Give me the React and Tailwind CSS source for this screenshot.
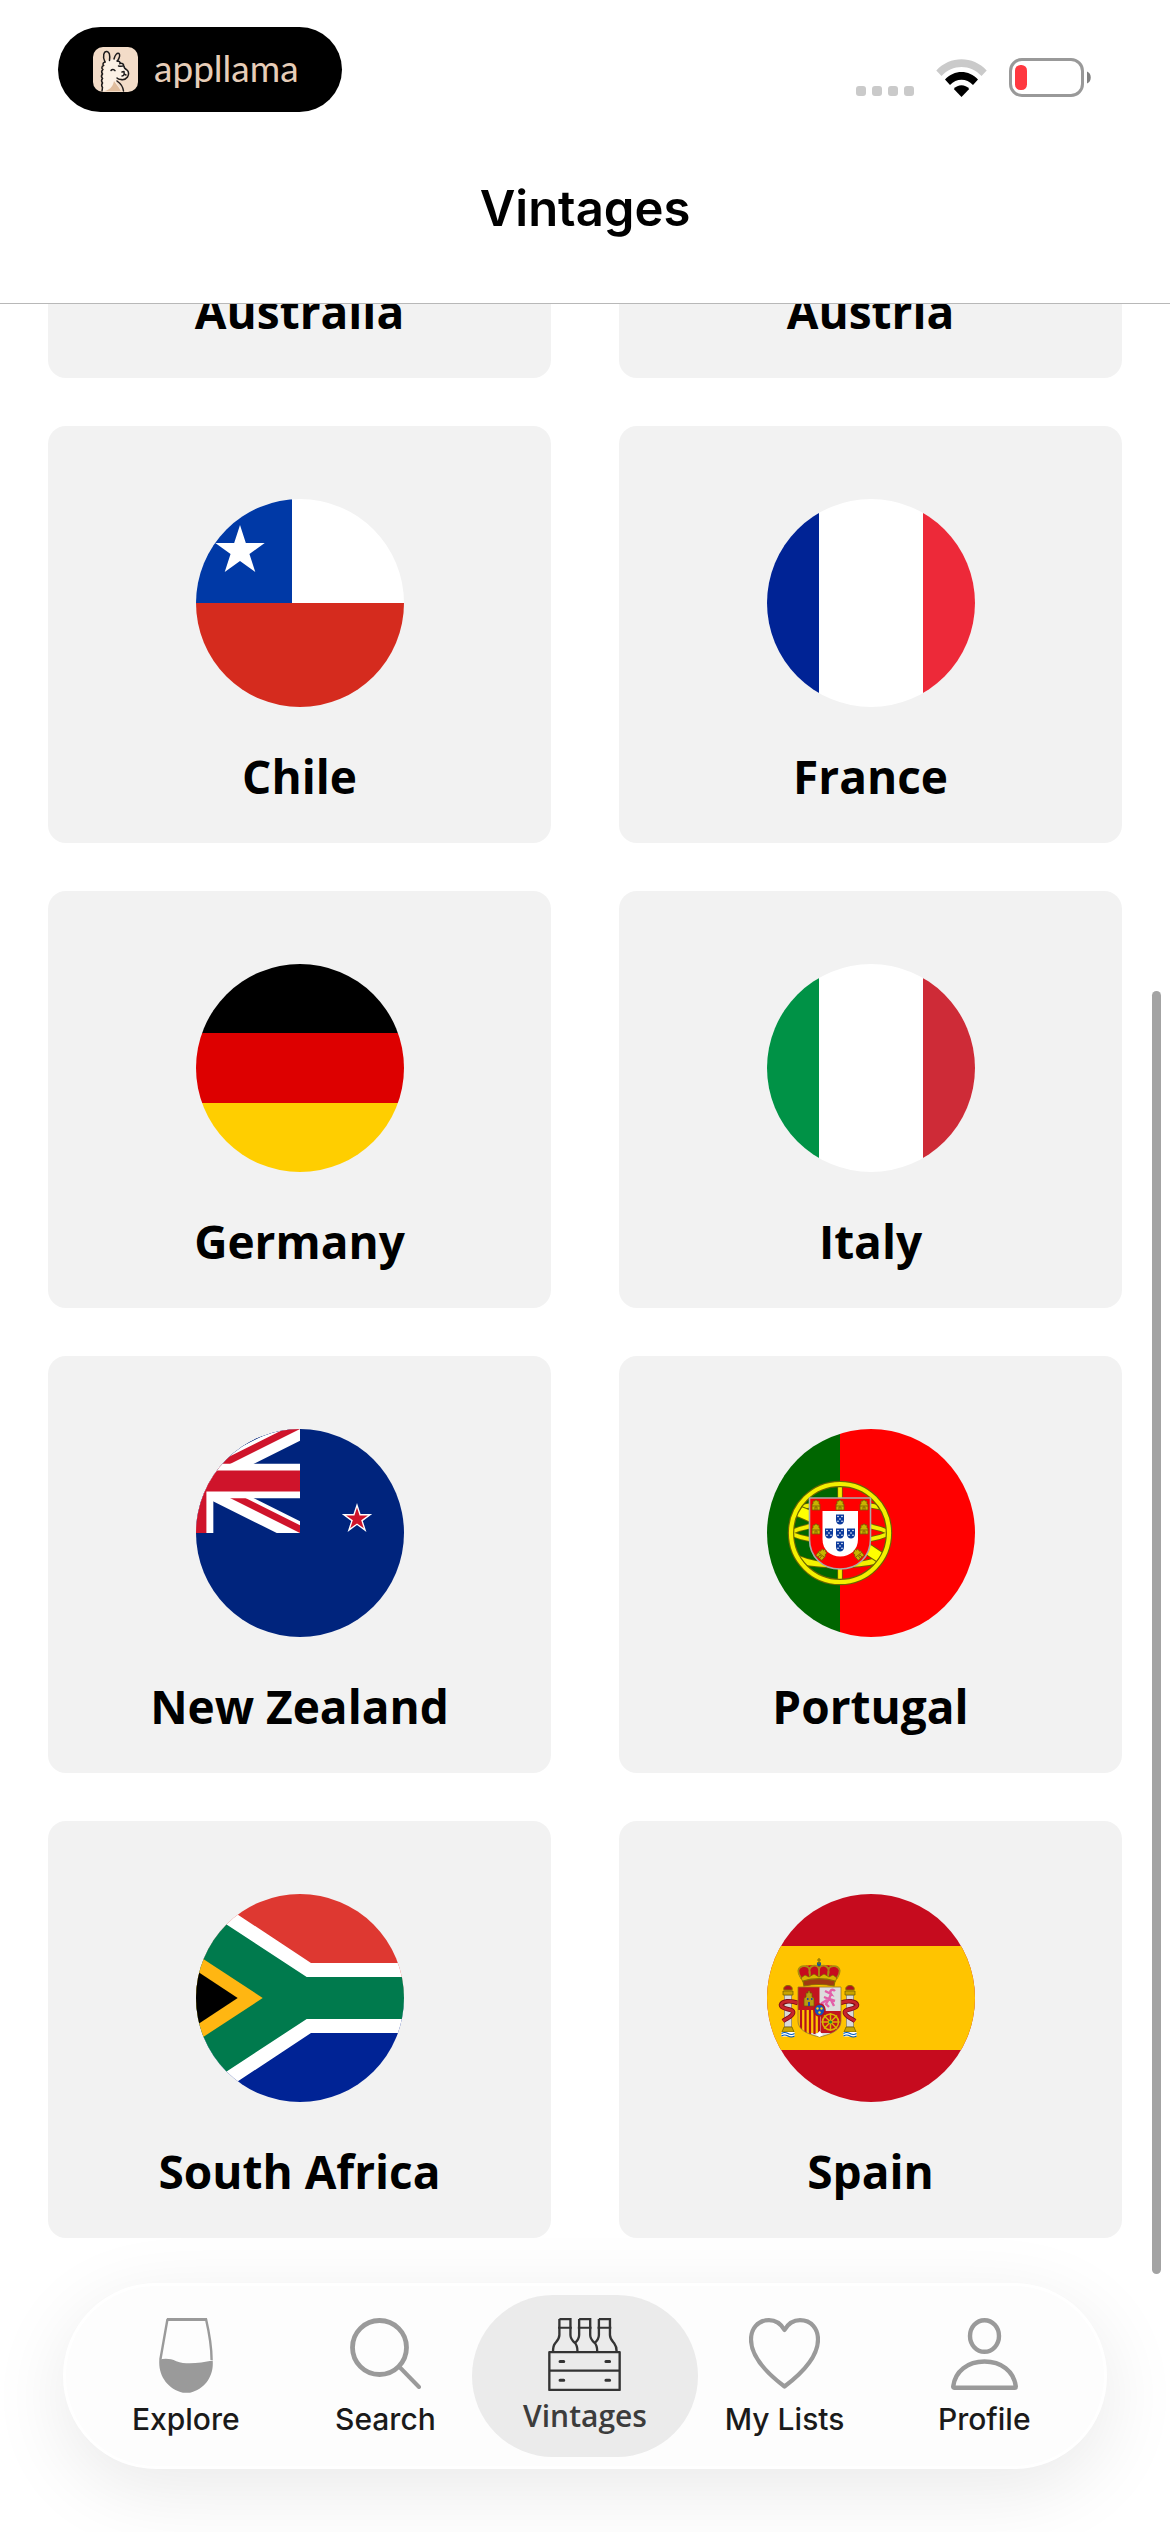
import React from "react";
import clsx from "clsx";

const starPoints = (cx, cy, r) =>
  Array.from({ length: 10 }, (_, i) => {
    const radius = i % 2 === 0 ? r : r * 0.382;
    const angle = (Math.PI / 5) * i - Math.PI / 2;
    return `${cx + radius * Math.cos(angle)},${cy + radius * Math.sin(angle)}`;
  }).join(" ");

const Flag = ({ children }) => (
  <svg
    viewBox="0 0 208 208"
    className="w-[208px] h-[208px] rounded-full overflow-hidden"
    aria-hidden="true"
  >
    {children}
  </svg>
);

const UnionJack = ({ id }) => (
  <g transform="translate(-104 0) scale(3.4667)">
    <clipPath id={`${id}-box`}>
      <path d="M0 0h60v30H0z" />
    </clipPath>
    <clipPath id={`${id}-saltire`}>
      <path d="M30 15h30v15zv15H0zH0V0zV0h30z" />
    </clipPath>
    <g clipPath={`url(#${id}-box)`}>
      <path d="M0 0h60v30H0z" fill="#00247d" />
      <path d="M0 0l60 30M60 0L0 30" stroke="#fff" strokeWidth="6" />
      <path
        d="M0 0l60 30M60 0L0 30"
        clipPath={`url(#${id}-saltire)`}
        stroke="#cf142b"
        strokeWidth="4"
      />
      <path d="M30 0v30M0 15h60" stroke="#fff" strokeWidth="10" />
      <path d="M30 0v30M0 15h60" stroke="#cf142b" strokeWidth="6" />
    </g>
  </g>
);

const AustraliaFlag = () => (
  <Flag>
    <path d="M0 0h208v208H0z" fill="#00247d" />
    <UnionJack id="au" />
    <polygon points={starPoints(160, 90, 16)} fill="#fff" />
  </Flag>
);

const AustriaFlag = () => (
  <Flag>
    <path d="M0 0h208v208H0z" fill="#ed2939" />
    <path d="M0 69h208v70H0z" fill="#fff" />
  </Flag>
);

const ChileFlag = () => (
  <Flag>
    <path d="M0 0h208v104H0z" fill="#fff" />
    <path d="M0 0h96v104H0z" fill="#0039a6" />
    <path d="M0 104h208v104H0z" fill="#d52b1e" />
    <polygon points={starPoints(44, 52, 26)} fill="#fff" />
  </Flag>
);

const Tricolour = ({ left, right }) => (
  <Flag>
    <path d="M0 0h208v208H0z" fill="#fff" />
    <path d="M0 0h52v208H0z" fill={left} />
    <path d="M156 0h52v208h-52z" fill={right} />
  </Flag>
);

const GermanyFlag = () => (
  <Flag>
    <path d="M0 0h208v70H0z" fill="#000" />
    <path d="M0 69h208v70H0z" fill="#d00" />
    <path d="M0 139h208v69H0z" fill="#ffce00" />
  </Flag>
);

const NewZealandFlag = () => (
  <Flag>
    <path d="M0 0h208v208H0z" fill="#00247d" />
    <UnionJack id="nz" />
    <polygon points={starPoints(161, 90, 16)} fill="#fff" />
    <polygon points={starPoints(161, 90, 11.5)} fill="#cf142b" />
  </Flag>
);

const Castle = ({ x, y, rotate = 0 }) => (
  <g transform={`translate(${x} ${y}) rotate(${rotate})`}>
    <path
      d="M-4 5v-6h1v-3h2v-1h2v1h2v3h1v6z"
      fill="#c8b400"
      stroke="#7a5c00"
      strokeWidth="0.8"
    />
    <path d="M-4 1h8M-1 5V2h2v3" fill="none" stroke="#7a5c00" strokeWidth="0.8" />
  </g>
);

const Quina = ({ x, y }) => (
  <g transform={`translate(${x} ${y})`}>
    <path d="M-4-4.500h8V1c0 3-2 4.500-4 4.500S-4 4-4 1z" fill="#0a3a9c" />
    <g fill="#fff">
      <circle cx="-2" cy="-2.500" r="0.800" />
      <circle cx="2" cy="-2.500" r="0.800" />
      <circle cx="0" cy="0" r="0.800" />
      <circle cx="-2" cy="2.200" r="0.800" />
      <circle cx="2" cy="2.200" r="0.800" />
    </g>
  </g>
);

const SPHERE =
  "M73 54v100M22 104c28-13 74-13 102 0M22 104c28 12 74 12 102 0M30 79c26-6 60-6 86 0M29 128c26 11 62 11 88 0M33 133c26 5 54 5 80-1";

const PortugalFlag = () => (
  <Flag>
    <path d="M0 0h73v208H0z" fill="#060" />
    <path d="M73 0h135v208H73z" fill="#f00" />
    <g fill="none">
      <path d={SPHERE} stroke="#6b6500" strokeWidth="5.500" />
      <path d={SPHERE} stroke="#f4f000" strokeWidth="3.800" />
      <path d="M28 81c26 9 66 34 86 48" stroke="#6b6500" strokeWidth="12" />
      <path d="M28 81c26 9 66 34 86 48" stroke="#ff0" strokeWidth="10" />
      <circle cx="73" cy="104" r="49" stroke="#6b6500" strokeWidth="6.500" />
      <circle cx="73" cy="104" r="49" stroke="#f4f000" strokeWidth="4.200" />
    </g>
    <path
      d="M42.500 69h61v41c0 18-13 30-30.500 30s-30.500-12-30.500-30z"
      fill="#f00"
      stroke="#a9a9a9"
      strokeWidth="1.600"
    />
    <path
      d="M55.500 82h35.500v28c0 11-8 17.500-17.800 17.500s-17.700-6.500-17.700-17.500z"
      fill="#fff"
    />
    <Castle x={49} y={76} />
    <Castle x={73} y={76} />
    <Castle x={97} y={76} />
    <Castle x={49} y={100} />
    <Castle x={97} y={100} />
    <Castle x={55} y={125} rotate={40} />
    <Castle x={91} y={125} rotate={-40} />
    <Quina x={73} y={90} />
    <Quina x={62} y={104} />
    <Quina x={73} y={104} />
    <Quina x={84} y={104} />
    <Quina x={73} y={117} />
  </Flag>
);

const SouthAfricaFlag = () => (
  <Flag>
    <path d="M0 0h208v104H0z" fill="#de3831" />
    <path d="M0 104h208v104H0z" fill="#002395" />
    <path d="M0-7l115 76h93v70h-93L0 215z" fill="#fff" />
    <path d="M0 10.500L110.700 83H208v42h-97.300L0 197.500z" fill="#007a4d" />
    <path d="M0 60.300L66.700 104 0 147.700z" fill="#ffb612" />
    <path d="M0 76.500L41.700 104 0 131.500z" fill="#000" />
  </Flag>
);

const Pillar = ({ x }) => (
  <g transform={`translate(${x} 0)`}>
    <path d="M-3.500 101h7v32h-7z" fill="#d9d9d9" stroke="#777" strokeWidth="0.700" />
    <path d="M-5 97h10v4H-5z" fill="#c9a400" stroke="#6d5a00" strokeWidth="0.700" />
    <path d="M-4 96c-2-6 10-6 8 0z" fill="#b3121f" stroke="#8a7000" strokeWidth="1" />
    <path d="M-4 133h8l2 5H-6z" fill="#c9a400" stroke="#6d5a00" strokeWidth="0.700" />
    <path d="M-6.500 138h13v4.500h-13z" fill="#fff" />
    <path
      d="M-6.500 139.500q3-2 6.500 0t6.500 0M-6.500 142q3-2 6.500 0t6.500 0"
      stroke="#005bbf"
      strokeWidth="1.200"
      fill="none"
    />
  </g>
);

const RIBBONS =
  "M31 109c-8-3-16-2-17 2 0 5 13 3 12 8-1 4-6 5-10 8M73 109c8-3 16-2 17 2 0 5-13 3-12 8 1 4 6 5 10 8";

const SpainFlag = () => (
  <Flag>
    <path d="M0 0h208v208H0z" fill="#c60b1e" />
    <path d="M0 52h208v104H0z" fill="#ffc400" />
    <Pillar x={21} />
    <Pillar x={83} />
    <path d={RIBBONS} fill="none" stroke="#7c0a14" strokeWidth="4.600" />
    <path d={RIBBONS} fill="none" stroke="#c8242c" strokeWidth="3" />
    {/* crown */}
    <path d="M34 85c-9-14 8-15 18-13 10-2 27-1 18 13z" fill="#c60b1e" />
    <path
      d="M34 84c-8-12 4-14 8-10 1 3 1 6 1 9M70 84c8-12-4-14-8-10-1 3-1 6-1 9M43 82c-4-12 9-13 9-6v7M61 82c4-12-9-13-9-6"
      fill="none"
      stroke="#a88c10"
      strokeWidth="1.800"
    />
    <path d="M34 84l4-3 4 2 5-3 5 3 5-3 5 3 4-2 4 3-2 4H36z" fill="#d8b400" stroke="#7a6500" strokeWidth="0.700" />
    <path d="M36 87c10-3 22-3 32 0l-1 5c-10-2-20-2-30 0z" fill="#a03a12" stroke="#8a7000" strokeWidth="1.200" />
    <circle cx="52" cy="70" r="2.200" fill="#1a5a8a" />
    <path d="M52 64v6M50 66h4" stroke="#8a7000" strokeWidth="1.200" />
    {/* quartered shield */}
    <clipPath id="es-shield">
      <path d="M31 93h43v34c0 9-9 13-21.500 16C40 140 31 136 31 127z" />
    </clipPath>
    <g clipPath="url(#es-shield)">
      <path d="M31 93h43v50H31z" fill="#ddd" />
      <path d="M31 93h21.500v23H31z" fill="#c3141f" />
      <path d="M31 116h21.500v23H31z" fill="#ffc400" />
      <path
        d="M34 116v24M38.500 116v24M43 116v24M47.500 116v24M52 116v24"
        stroke="#b5121b"
        strokeWidth="2.200"
      />
      <path d="M53.500 117h21v22h-21z" fill="#c3141f" />
    </g>
    <path d="M37 112v-8l2-1v-4h2v-2h2v2h2v4l2 1v8z" fill="#b89a12" stroke="#6d5a00" strokeWidth="0.700" />
    <path d="M40 105h1.500M44 105h1.500M42 108v4" stroke="#2347a8" strokeWidth="2" />
    <path
      d="M68 97c-3-3-6 0-4 3l-6-3M64 100l-2 5-5-2M62 105l6 2M62 105l-3 5 3 3M64 106l3 6M60 106l-5 3 1 3"
      fill="none"
      stroke="#e35fa8"
      strokeWidth="2.400"
    />
    <circle cx="63.500" cy="128" r="8" fill="none" stroke="#d8b400" strokeWidth="1.600" />
    <path
      d="M63.500 119v18M54.500 128h18M57 121.500l13 13M70 121.500l-13 13"
      stroke="#d8b400"
      strokeWidth="1.500"
    />
    <circle cx="63.500" cy="128" r="1.600" fill="#1a8a3a" />
    <path
      d="M31 93h43v34c0 9-9 13-21.500 16C40 140 31 136 31 127z"
      fill="none"
      stroke="#9a7a20"
      strokeWidth="0.800"
    />
    <path d="M49 141l3.500-4 3.500 4-3.500 2z" fill="#fff" />
    <ellipse cx="52.500" cy="116" rx="5.500" ry="6" fill="#1450b8" stroke="#b5121b" strokeWidth="1.600" />
    <g fill="#ffd21a">
      <circle cx="50.500" cy="114.500" r="1.200" />
      <circle cx="54.500" cy="114.500" r="1.200" />
      <circle cx="52.500" cy="118.500" r="1.200" />
    </g>
  </Flag>
);

const GlassIcon = () => (
  <svg viewBox="0 0 54 75" className="w-[54px] h-[75px]" aria-hidden="true">
    <path d="M8 1.500h40" stroke="#9a9a9a" strokeWidth="3" />
    <path
      d="M8.500 1L1.300 42M47 1c3 13 5.600 28 5.600 41"
      fill="none"
      stroke="#9a9a9a"
      strokeWidth="2.400"
    />
    <path
      d="M.3 42c5-2 11-1.500 17 1.200 11 4 24 1.500 36.400-.7C55 58 46 71 31 74.700h-7C9 71-.8 58 .3 42z"
      fill="#9a9a9a"
    />
  </svg>
);

const SearchIcon = () => (
  <svg viewBox="0 0 71 71" className="w-[71px] h-[71px]" aria-hidden="true">
    <g fill="none" stroke="#9a9a9a" strokeLinecap="round">
      <circle cx="29.500" cy="29.500" r="27" strokeWidth="4.800" />
      <path d="M49.500 49l19.500 20" strokeWidth="4" />
    </g>
  </svg>
);

const CrateIcon = () => (
  <svg viewBox="88 57 218 218" className="w-[73px] h-[73px]" aria-hidden="true">
    <g fill="none" stroke="#343434" strokeWidth="7">
      <path d="M92 159h210v113H92zM92 214h210" strokeLinejoin="round" />
      <path d="M122 60h33v48c0 12 7 18 13 23 5 5 8 10 8 26M122 60v48c0 12-7 18-13 25-4 5-6 12-6 24" />
      <path d="M181 60h33v48c0 12 7 18 13 23 5 5 8 10 8 26M181 60v48c0 10-5 17-13 24" />
      <path d="M240 60h33v48c0 12 7 18 13 25 4 5 7 12 7 24M240 60v48c0 10-5 17-13 24" />
      <path d="M118 86h41M177 86h41M236 86h41" strokeWidth="6" />
      <path
        d="M124 187h11M261 187h11M124 243h11M261 243h11"
        strokeWidth="9"
        strokeLinecap="round"
      />
    </g>
  </svg>
);

const HeartIcon = () => (
  <svg viewBox="0 0 71 71" className="w-[71px] h-[71px]" aria-hidden="true">
    <path
      d="M35.500 12C32 6 27 2.200 20 2.200 8.500 2.200 2 11 2 21.500c0 17 15 33 33.500 47C54 54.500 69 38 69 21.500 69 11 62.500 2.200 51 2.200c-7 0-12 3.800-15.500 9.800z"
      fill="none"
      stroke="#9a9a9a"
      strokeWidth="4.200"
      strokeLinejoin="round"
    />
  </svg>
);

const ProfileIcon = () => (
  <svg viewBox="0 0 67 72" className="w-[67px] h-[72px]" aria-hidden="true">
    <g fill="none" stroke="#9a9a9a" strokeWidth="4.400" strokeLinejoin="round">
      <ellipse cx="33.500" cy="18" rx="14.500" ry="15.800" />
      <path d="M2.200 68.500C4 53 17 43.500 33.500 43.500S63 53 64.800 68.500c0 .8-.5 1.300-1.300 1.300h-60c-.8 0-1.300-.5-1.300-1.300z" />
    </g>
  </svg>
);

const LlamaLogo = () => (
  <svg viewBox="0 0 45 45" className="w-[45px] h-[45px] rounded-[10px]" aria-hidden="true">
    <path d="M0 0h45v45H0z" fill="#f3dcc8" />
    <path
      d="M10 44c-1-9 0-20 2-28l2-3 9-1 4 2 4 3 4 8-3 6-8 1-1 3c1 3 4 5 5 9z"
      fill="#fcf1e6"
    />
    <path d="M12 44c4-1 8-4 9-10 2 3 5 6 7 10z" fill="#e0bd9d" />
    <g fill="none" stroke="#1e1b1c" strokeWidth="1.500" strokeLinecap="round">
      <path d="M12 15C9 9 11 4 14 4.500c3 .5 3 5 2.500 9M21 12c1-4 3-6.500 5-5.500 1.500 1.500 0 5-1.500 7.500" />
      <path d="M24 14c2 0 3.500 1 3 2.500 2-.5 4 .5 3.500 2-1 1-3 1-5 .5M31 19c0 2 1 3 3 4 2 1.500 2 5 .5 7-1.500 2-4 3-6.500 2.500-2 0-3-.5-4-1.500M29 25l2-.5M31 25c.5 2 0 4-2 4M31 27l2 1" />
      <path d="M18 23.500c1-1.500 3-1.500 4 .2" />
      <path d="M12 15c-2 .5-2.500 2-1.500 3.500-2 1-2 3-.7 4-1.500 1.500-1.500 3-.3 4.500-1.500 1.500-1.300 3 0 4.500-1.300 1.500-1.300 3 0 4.500-1.300 1.500-1 3 0 4.500L9 44M24 34c3 2 6 6 6.500 10" />
    </g>
  </svg>
);

const WifiIcon = () => (
  <svg viewBox="0 0 51 38" className="w-[51px] h-[38px] mx-[22px]" aria-label="Wi-Fi">
    <path
      d="M.3 11.500C14-3.500 37-3.500 50.700 11.500L45.500 17C34.500 5 16.500 5 5.500 17z"
      fill="#cacaca"
    />
    <path d="M9 20.500c9-10 24-10 33 0l-5 5.500c-6.500-7-16.500-7-23 0z" fill="#000" />
    <path d="M17.800 30c4-5 11.400-5 15.400 0l-7.700 8z" fill="#000" />
  </svg>
);

const BatteryIcon = () => (
  <svg viewBox="0 0 83 39" className="w-[83px] h-[39px]" aria-label="Battery low">
    <rect
      x="1.500"
      y="1.500"
      width="72"
      height="36"
      rx="11.500"
      fill="none"
      stroke="#999"
      strokeWidth="3"
    />
    <rect x="6" y="7" width="12" height="25" rx="5.500" fill="#ff3840" />
    <path d="M78 13.500c5 1.500 5 10.500 0 12z" fill="#808080" />
  </svg>
);

const countries = [
  { name: "Australia", flag: <AustraliaFlag /> },
  { name: "Austria", flag: <AustriaFlag /> },
  { name: "Chile", flag: <ChileFlag /> },
  { name: "France", flag: <Tricolour left="#002395" right="#ed2939" /> },
  { name: "Germany", flag: <GermanyFlag /> },
  { name: "Italy", flag: <Tricolour left="#009246" right="#ce2b37" /> },
  { name: "New Zealand", flag: <NewZealandFlag /> },
  { name: "Portugal", flag: <PortugalFlag /> },
  { name: "South Africa", flag: <SouthAfricaFlag /> },
  { name: "Spain", flag: <SpainFlag /> },
];

const tabs = [
  { label: "Explore", icon: <GlassIcon /> },
  { label: "Search", icon: <SearchIcon /> },
  { label: "Vintages", icon: <CrateIcon />, active: true },
  { label: "My Lists", icon: <HeartIcon /> },
  { label: "Profile", icon: <ProfileIcon /> },
];

const StatusBar = () => (
  <div className="flex items-center justify-between pt-[27px] pl-[58px] pr-[78px]">
    <div className="flex items-center h-[85px] w-[284px] pl-[35px] gap-4 rounded-full bg-black">
      <LlamaLogo />
      <span className="pb-1 font-['Lato',sans-serif] text-[37px] leading-[40px] text-[#e6cdb8]">
        appllama
      </span>
    </div>
    <div className="flex items-end pt-4">
      <div className="flex gap-[6px] pb-px">
        {[0, 1, 2, 3].map((bar) => (
          <span key={bar} className="w-[10px] h-[10px] rounded-[3px] bg-[#cacaca]" />
        ))}
      </div>
      <WifiIcon />
      <BatteryIcon />
    </div>
  </div>
);

const CountryCard = ({ name, flag }) => (
  <button
    type="button"
    className="flex flex-col items-center gap-[39px] pt-[73px] pb-[37px] rounded-[18px] bg-[#f2f2f2]"
  >
    {flag}
    <span className="font-['Open_Sans','Noto_Sans',sans-serif] font-bold text-[46px] leading-[60px] text-black">
      {name}
    </span>
  </button>
);

const TabBar = () => (
  <nav className="absolute left-[63px] right-[63px] bottom-[63px] grid grid-cols-5 px-5 py-[9px] rounded-full border-[3px] border-white bg-[#fdfdfd] shadow-[0_20px_80px_rgba(0,0,0,0.09)]">
    {tabs.map(({ label, icon, active }) => (
      <a
        key={label}
        href="#"
        aria-current={active ? "page" : undefined}
        className={clsx(
          "flex flex-col items-center h-[162px] pt-[23px] gap-[7px] rounded-full",
          active && "-mx-[13px] bg-[#ebebeb]"
        )}
      >
        <span className="h-[76px]">{icon}</span>
        <span
          className={
            active
              ? "font-['Open_Sans',sans-serif] font-semibold text-[30px] leading-[30px] text-[#3c3c3c]"
              : "font-['Inter',sans-serif] font-medium text-[30px] leading-[36px] text-[#1a1a1a]"
          }
        >
          {label}
        </span>
      </a>
    ))}
  </nav>
);

const App = () => {
  return (
    <div className="relative flex flex-col w-full h-screen overflow-hidden bg-white">
      <header className="shrink-0 border-b border-[#b8b8b8] bg-white">
        <StatusBar />
        <h1 className="mt-[67px] pb-16 text-center font-['Inter',sans-serif] font-semibold text-[49px] leading-[60px] text-black">
          Vintages
        </h1>
      </header>

      {/* list is scrolled to its end, so the first row runs under the header */}
      <main className="flex-1 min-h-0 flex flex-col justify-end overflow-hidden px-12 pb-[294px]">
        <div className="grid grid-cols-2 gap-x-[68px] gap-y-12">
          {countries.map((country) => (
            <CountryCard key={country.name} {...country} />
          ))}
        </div>
      </main>

      <div className="absolute right-[9px] top-[991px] bottom-[258px] w-[9px] rounded-full bg-[#a3a3a3]" />
      <TabBar />
    </div>
  );
};

export default App;
